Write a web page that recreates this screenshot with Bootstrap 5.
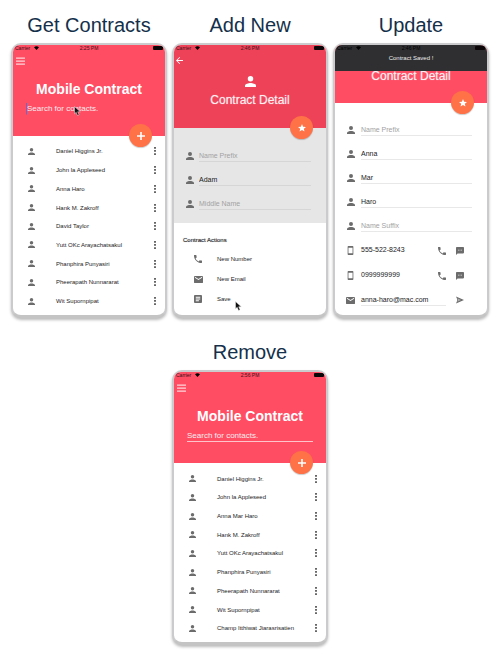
<!DOCTYPE html>
<html lang="en">
<head>
<meta charset="utf-8">
<meta name="viewport" content="width=device-width, initial-scale=1">
<title>Mobile Contract</title>
<link href="https://cdn.jsdelivr.net/npm/bootstrap@5.3.0/dist/css/bootstrap.min.css" rel="stylesheet">
<style>
body{font-family:"Liberation Sans",Arial,sans-serif;background:#fff;color:#222}
.board{display:grid;grid-template-columns:repeat(3,minmax(0,1fr));column-gap:5px;row-gap:20px;padding:11px 11px 20px}
.mid{grid-column:2}
.caption{font-size:20px;line-height:28px;font-weight:400;color:#14304a;margin-bottom:4px}
.phone{border:2px solid #cbcbcd;border-bottom:3px solid #c4c4c4;border-radius:10px;box-shadow:0 2px 3px #bbb;background:#fff}
.screen{aspect-ratio:9/16;border-radius:7px;font-size:7px;line-height:12px}
.top-bar{background:#ff4d64;color:#fff;z-index:1}
.list-top{height:91px}
.add-top{height:83px;background:#ee4259}
.edit-top{height:58px}
.status{font-size:5px;line-height:6px;color:#3b1218;padding:0 2px;display:grid;grid-template-columns:1fr auto 1fr;align-items:center;z-index:3}
.status svg{width:5px;height:4px;margin-left:2px;vertical-align:0}
.battery{width:10px;height:4px;border-radius:1px;background:#0c0507;justify-self:end}
.plain{border:0;background:none;padding:0;color:inherit;line-height:0}
.nav-btn{margin:6px 0 0 2px}
.menu-btn{margin:6px 0 0 3px}
.app-title{font-size:14px;line-height:18px;font-weight:700;margin:14px 0 0;text-align:center}
.detail-title{font-size:12px;line-height:16px;font-weight:400;margin:0;text-align:center;text-shadow:0 0 1px #fff8;color:#ffeef0}
.add-top .detail-title{margin-top:5px}
.avatar{margin-top:12px}
.search{border:0;border-bottom:1px solid transparent;background:none;color:#fff;font-size:8px;line-height:11px;padding:0;margin:5px 13px 0;outline:0}
.search::placeholder{color:#fff;opacity:.9}
.search.lined{border-color:#ffc4cb}
.caret{border-left:1px solid #5a6fd0}
.fab{position:absolute;right:13px;bottom:-11px;width:23px;height:23px;border:0;border-radius:50%;background:#ff7247;color:#fff;padding:0;display:flex;align-items:center;justify-content:center;box-shadow:0 1px 1px #0003}
.people{min-height:0;margin:0 0 -14px;padding:6px 9px 0 15px;font-size:6px}
.people li{flex:1 1 0;min-height:0;color:#1c1c1c}
.people .ico{margin-right:21px}
.ico{fill:#6c6c6c;flex:none}
.dots{fill:#666;width:2px;height:8px}
.i7{width:7px;height:7px}
.i8{width:8px;height:8px}
.i9{width:9px;height:9px}
.i11{width:11px;height:11px}
.fields{padding:16px 15px 0 11px}
.white-form{padding-top:15px}
.grey-area{background:#e6e6e6;height:95px}
.entry{height:24px;gap:5px}
.entry .slot{width:9px;text-align:center;flex:none;line-height:0}
.entry input{border:0;border-bottom:1px solid #d6d6d6;background:none;font-size:7px;line-height:10px;padding:0;color:#222;min-width:0;outline:0;flex:1}
.white-form .entry{gap:6px}
.white-form .entry input{border-color:#e8e8e8}
.entry input::placeholder{color:#a2a2a2;opacity:1}
.entry .bare{border-color:transparent!important}
.contact-row{height:25px}
.side{gap:10px;padding-right:8px;line-height:0}
.section-name{font-size:6px;line-height:10px;margin:12px 0 4px 9px;color:#111;font-weight:400;text-shadow:0 0 1px #999}
.actions{padding:0 0 0 20px;margin:0;font-size:6px}
.actions button{height:20px;border:0;background:none;padding:0;display:flex;align-items:center;gap:14px;color:#222}
.actions .i8{margin-right:1px}
.saved{top:0;left:0;right:0;height:26px;background:#2f2f31;color:#eee;font-size:6px;z-index:2}
.pointer{position:absolute;width:7px;height:10px;z-index:4}
</style>
<script src="https://cdn.jsdelivr.net/npm/bootstrap@5.3.0/dist/js/bootstrap.bundle.min.js"></script>
</head>
<body>
<svg class="d-none" aria-hidden="true">
<symbol id="person" viewBox="4 4 16 16"><path d="M12 12a4 4 0 1 0 0-8 4 4 0 0 0 0 8zm0 2c-2.700 0-8 1.300-8 4v2h16v-2c0-2.700-5.300-4-8-4z"/></symbol>
<symbol id="dots" viewBox="0 0 2 8"><path d="M0 0h2v1.700H0zM0 3.100h2v1.700H0zM0 6.200h2v1.700H0z"/></symbol>
<symbol id="menu" viewBox="0 0 9 8"><path d="M0 0h9v1.300H0zM0 3h9v1.300H0zM0 6h9v1.300H0z"/></symbol>
<symbol id="back" viewBox="4 4 16 16"><path d="M20 11H7.800l5.600-5.600L12 4l-8 8 8 8 1.400-1.400L7.800 13H20z"/></symbol>
<symbol id="plus" viewBox="5 5 14 14"><path d="M19 13.400h-5.600V19h-2.800v-5.600H5v-2.800h5.600V5h2.800v5.600H19z"/></symbol>
<symbol id="star" viewBox="2 2 20 20"><path d="M12 17.300 18.200 21l-1.600-7L22 9.200l-7.200-.6L12 2 9.200 8.600 2 9.200 7.500 14l-1.700 7z"/></symbol>
<symbol id="call" viewBox="3 3 18 18"><path d="M6.600 10.800c1.400 2.800 3.800 5.100 6.600 6.600l2.200-2.200c.3-.3.7-.4 1-.2 1.100.4 2.300.6 3.600.6.600 0 1 .4 1 1V20c0 .6-.4 1-1 1C10.600 21 3 13.400 3 4c0-.6.5-1 1-1h3.500c.6 0 1 .5 1 1 0 1.300.2 2.500.6 3.600.1.300 0 .7-.2 1z"/></symbol>
<symbol id="mail" viewBox="2 3 20 18"><path d="M20 4H4a2 2 0 0 0-2 2v12c0 1.100.9 2 2 2h16a2 2 0 0 0 2-2V6a2 2 0 0 0-2-2zm0 4-8 5-8-5V6l8 5 8-5z"/></symbol>
<symbol id="note" viewBox="3 3 18 18"><path fill-rule="evenodd" d="M19 3H5a2 2 0 0 0-2 2v14c0 1.100.9 2 2 2h14a2 2 0 0 0 2-2V5a2 2 0 0 0-2-2zM7 7h10v2H7zm0 4h10v2H7zm0 4h7v2H7z"/></symbol>
<symbol id="cell" viewBox="5 1 14 22"><path fill-rule="evenodd" d="M17 1H7a2 2 0 0 0-2 2v18c0 1.100.9 2 2 2h10a2 2 0 0 0 2-2V3a2 2 0 0 0-2-2zm0 18H7V5h10z"/></symbol>
<symbol id="sms" viewBox="2 2 20 20"><path fill-rule="evenodd" d="M20 2H4a2 2 0 0 0-2 2v18l4-4h14a2 2 0 0 0 2-2V4a2 2 0 0 0-2-2zM9 11H7V9h2zm4 0h-2V9h2zm4 0h-2V9h2z"/></symbol>
<symbol id="send" viewBox="2 3 21 18"><path d="M2 21 23 12 2 3l4 9zM6 8l9 4-9 4 2-4z" fill-rule="evenodd"/><path d="M5 10.500h12v3H5z"/></symbol>
<symbol id="wifi" viewBox="0 0 10 8"><path d="M0 2.500Q5-2 10 2.500L5 8z"/></symbol>
<symbol id="arrow" viewBox="0 0 7 10"><path fill="#111" stroke="#eee" stroke-width=".5" d="M.5.5v7.300l1.700-1.500L3.500 9.500l1.600-.7-1.400-3h2.600z"/></symbol>
</svg>

<main class="board">
<section>
<h2 class="caption text-center">Get Contracts</h2>
<div class="phone"><div class="screen position-relative overflow-hidden d-flex flex-column">
<header class="top-bar list-top position-relative d-flex flex-column flex-shrink-0">
<div class="status"><span>Carrier <svg><use href="#wifi"/></svg></span><span>2:25 PM</span><span class="battery"></span></div>
<button class="plain menu-btn align-self-start" aria-label="Menu"><svg class="i9" fill="#ffd5da"><use href="#menu"/></svg></button>
<h3 class="app-title">Mobile Contract</h3>
<input class="search caret" type="text" placeholder="Search for contacts." aria-label="Search for contacts">
<button class="fab" aria-label="Add contact"><svg class="i8" fill="#fff"><use href="#plus"/></svg></button>
<svg class="pointer" style="left:61px;top:61px"><use href="#arrow"/></svg>
</header>
<ul class="people list-unstyled d-flex flex-column flex-grow-1">
<li class="d-flex align-items-center"><svg class="ico i7"><use href="#person"/></svg><span class="flex-grow-1">Daniel Higgins Jr.</span><button class="plain" aria-label="More"><svg class="dots"><use href="#dots"/></svg></button></li>
<li class="d-flex align-items-center"><svg class="ico i7"><use href="#person"/></svg><span class="flex-grow-1">John la Appleseed</span><button class="plain" aria-label="More"><svg class="dots"><use href="#dots"/></svg></button></li>
<li class="d-flex align-items-center"><svg class="ico i7"><use href="#person"/></svg><span class="flex-grow-1">Anna Haro</span><button class="plain" aria-label="More"><svg class="dots"><use href="#dots"/></svg></button></li>
<li class="d-flex align-items-center"><svg class="ico i7"><use href="#person"/></svg><span class="flex-grow-1">Hank M. Zakroff</span><button class="plain" aria-label="More"><svg class="dots"><use href="#dots"/></svg></button></li>
<li class="d-flex align-items-center"><svg class="ico i7"><use href="#person"/></svg><span class="flex-grow-1">David Taylor</span><button class="plain" aria-label="More"><svg class="dots"><use href="#dots"/></svg></button></li>
<li class="d-flex align-items-center"><svg class="ico i7"><use href="#person"/></svg><span class="flex-grow-1">Yutt OKc Arayachatsakul</span><button class="plain" aria-label="More"><svg class="dots"><use href="#dots"/></svg></button></li>
<li class="d-flex align-items-center"><svg class="ico i7"><use href="#person"/></svg><span class="flex-grow-1">Phanphira Punyasiri</span><button class="plain" aria-label="More"><svg class="dots"><use href="#dots"/></svg></button></li>
<li class="d-flex align-items-center"><svg class="ico i7"><use href="#person"/></svg><span class="flex-grow-1">Pheerapath Nunnararat</span><button class="plain" aria-label="More"><svg class="dots"><use href="#dots"/></svg></button></li>
<li class="d-flex align-items-center"><svg class="ico i7"><use href="#person"/></svg><span class="flex-grow-1">Wit Supornpipat</span><button class="plain" aria-label="More"><svg class="dots"><use href="#dots"/></svg></button></li>
<li class="d-flex align-items-center justify-content-end"><button class="plain" aria-label="More"><svg class="dots"><use href="#dots"/></svg></button></li>
</ul>
</div></div>
</section>

<section>
<h2 class="caption text-center">Add New</h2>
<div class="phone"><div class="screen position-relative overflow-hidden">
<header class="top-bar add-top position-relative d-flex flex-column">
<div class="status"><span>Carrier <svg><use href="#wifi"/></svg></span><span>2:46 PM</span><span class="battery"></span></div>
<button class="plain nav-btn align-self-start" aria-label="Back"><svg class="i7" fill="#fff"><use href="#back"/></svg></button>
<svg class="avatar i11 align-self-center flex-shrink-0" fill="#fff"><use href="#person"/></svg>
<h3 class="detail-title">Contract Detail</h3>
<button class="fab" aria-label="Favourite"><svg class="i8" fill="#fff"><use href="#star"/></svg></button>
</header>
<form class="grey-area fields">
<div class="entry d-flex align-items-center"><label class="slot" for="a1"><svg class="ico i8"><use href="#person"/></svg></label><input id="a1" type="text" aria-label="Name prefix" placeholder="Name Prefix"></div>
<div class="entry d-flex align-items-center"><label class="slot" for="a2"><svg class="ico i8"><use href="#person"/></svg></label><input id="a2" type="text" aria-label="First name" value="Adam"></div>
<div class="entry d-flex align-items-center"><label class="slot" for="a3"><svg class="ico i8"><use href="#person"/></svg></label><input id="a3" type="text" aria-label="Middle name" placeholder="Middle Name"></div>
</form>
<h4 class="section-name">Contract Actions</h4>
<div class="actions position-relative">
<button><svg class="ico i8"><use href="#call"/></svg>New Number</button>
<button><svg class="ico i9"><use href="#mail"/></svg>New Email</button>
<button><svg class="ico i8"><use href="#note"/></svg>Save</button>
<svg class="pointer" style="left:61px;top:52px"><use href="#arrow"/></svg>
</div>
</div></div>
</section>

<section>
<h2 class="caption text-center">Update</h2>
<div class="phone"><div class="screen position-relative overflow-hidden">
<div class="saved position-absolute d-flex align-items-center justify-content-center" role="status">Contract Saved !</div>
<div class="status position-absolute top-0 start-0 w-100 text-black"><span>Carrier <svg><use href="#wifi"/></svg></span><span>2:46 PM</span><span class="battery"></span></div>
<header class="top-bar edit-top position-relative d-flex align-items-center justify-content-center">
<h3 class="detail-title pt-1">Contract Detail</h3>
<button class="fab" aria-label="Favourite"><svg class="i8" fill="#fff"><use href="#star"/></svg></button>
</header>
<form class="fields white-form">
<div class="entry d-flex align-items-center"><label class="slot" for="u1"><svg class="ico i8"><use href="#person"/></svg></label><input id="u1" type="text" aria-label="Name prefix" placeholder="Name Prefix"></div>
<div class="entry d-flex align-items-center"><label class="slot" for="u2"><svg class="ico i8"><use href="#person"/></svg></label><input id="u2" type="text" aria-label="First name" value="Anna"></div>
<div class="entry d-flex align-items-center"><label class="slot" for="u3"><svg class="ico i8"><use href="#person"/></svg></label><input id="u3" type="text" aria-label="Middle name" value="Mar"></div>
<div class="entry d-flex align-items-center"><label class="slot" for="u4"><svg class="ico i8"><use href="#person"/></svg></label><input id="u4" type="text" aria-label="Last name" value="Haro"></div>
<div class="entry d-flex align-items-center"><label class="slot" for="u5"><svg class="ico i8"><use href="#person"/></svg></label><input id="u5" type="text" aria-label="Name suffix" placeholder="Name Suffix"></div>
<div class="entry contact-row d-flex align-items-center"><label class="slot" for="u6"><svg class="ico i9"><use href="#cell"/></svg></label><input class="bare" id="u6" type="tel" aria-label="Mobile" value="555-522-8243"><span class="side d-flex"><button type="button" class="plain" aria-label="Call"><svg class="ico i8"><use href="#call"/></svg></button><button type="button" class="plain" aria-label="Message"><svg class="ico i8"><use href="#sms"/></svg></button></span></div>
<div class="entry contact-row d-flex align-items-center"><label class="slot" for="u7"><svg class="ico i9"><use href="#cell"/></svg></label><input class="bare" id="u7" type="tel" aria-label="Mobile 2" value="0999999999"><span class="side d-flex"><button type="button" class="plain" aria-label="Call"><svg class="ico i8"><use href="#call"/></svg></button><button type="button" class="plain" aria-label="Message"><svg class="ico i8"><use href="#sms"/></svg></button></span></div>
<div class="entry d-flex align-items-center"><label class="slot" for="u8"><svg class="ico i9"><use href="#mail"/></svg></label><input id="u8" type="email" aria-label="Email" value="anna-haro@mac.com"><span class="side d-flex ps-1"><button type="button" class="plain" aria-label="Send"><svg class="ico i8"><use href="#send"/></svg></button></span></div>
</form>
</div></div>
</section>

<section class="mid">
<h2 class="caption text-center">Remove</h2>
<div class="phone"><div class="screen position-relative overflow-hidden d-flex flex-column">
<header class="top-bar list-top position-relative d-flex flex-column flex-shrink-0">
<div class="status"><span>Carrier <svg><use href="#wifi"/></svg></span><span>2:56 PM</span><span class="battery"></span></div>
<button class="plain menu-btn align-self-start" aria-label="Menu"><svg class="i9" fill="#ffd5da"><use href="#menu"/></svg></button>
<h3 class="app-title">Mobile Contract</h3>
<input class="search lined" type="text" placeholder="Search for contacts." aria-label="Search for contacts">
<button class="fab" aria-label="Add contact"><svg class="i8" fill="#fff"><use href="#plus"/></svg></button>
</header>
<ul class="people list-unstyled d-flex flex-column flex-grow-1">
<li class="d-flex align-items-center"><svg class="ico i7"><use href="#person"/></svg><span class="flex-grow-1">Daniel Higgins Jr.</span><button class="plain" aria-label="More"><svg class="dots"><use href="#dots"/></svg></button></li>
<li class="d-flex align-items-center"><svg class="ico i7"><use href="#person"/></svg><span class="flex-grow-1">John la Appleseed</span><button class="plain" aria-label="More"><svg class="dots"><use href="#dots"/></svg></button></li>
<li class="d-flex align-items-center"><svg class="ico i7"><use href="#person"/></svg><span class="flex-grow-1">Anna Mar Haro</span><button class="plain" aria-label="More"><svg class="dots"><use href="#dots"/></svg></button></li>
<li class="d-flex align-items-center"><svg class="ico i7"><use href="#person"/></svg><span class="flex-grow-1">Hank M. Zakroff</span><button class="plain" aria-label="More"><svg class="dots"><use href="#dots"/></svg></button></li>
<li class="d-flex align-items-center"><svg class="ico i7"><use href="#person"/></svg><span class="flex-grow-1">Yutt OKc Arayachatsakul</span><button class="plain" aria-label="More"><svg class="dots"><use href="#dots"/></svg></button></li>
<li class="d-flex align-items-center"><svg class="ico i7"><use href="#person"/></svg><span class="flex-grow-1">Phanphira Punyasiri</span><button class="plain" aria-label="More"><svg class="dots"><use href="#dots"/></svg></button></li>
<li class="d-flex align-items-center"><svg class="ico i7"><use href="#person"/></svg><span class="flex-grow-1">Pheerapath Nunnararat</span><button class="plain" aria-label="More"><svg class="dots"><use href="#dots"/></svg></button></li>
<li class="d-flex align-items-center"><svg class="ico i7"><use href="#person"/></svg><span class="flex-grow-1">Wit Supornpipat</span><button class="plain" aria-label="More"><svg class="dots"><use href="#dots"/></svg></button></li>
<li class="d-flex align-items-center"><svg class="ico i7"><use href="#person"/></svg><span class="flex-grow-1">Champ Itthiwat Jiarasrisatien</span><button class="plain" aria-label="More"><svg class="dots"><use href="#dots"/></svg></button></li>
<li class="d-flex align-items-center justify-content-end"><button class="plain" aria-label="More"><svg class="dots"><use href="#dots"/></svg></button></li>
</ul>
</div></div>
</section>
</main>
</body>
</html>
